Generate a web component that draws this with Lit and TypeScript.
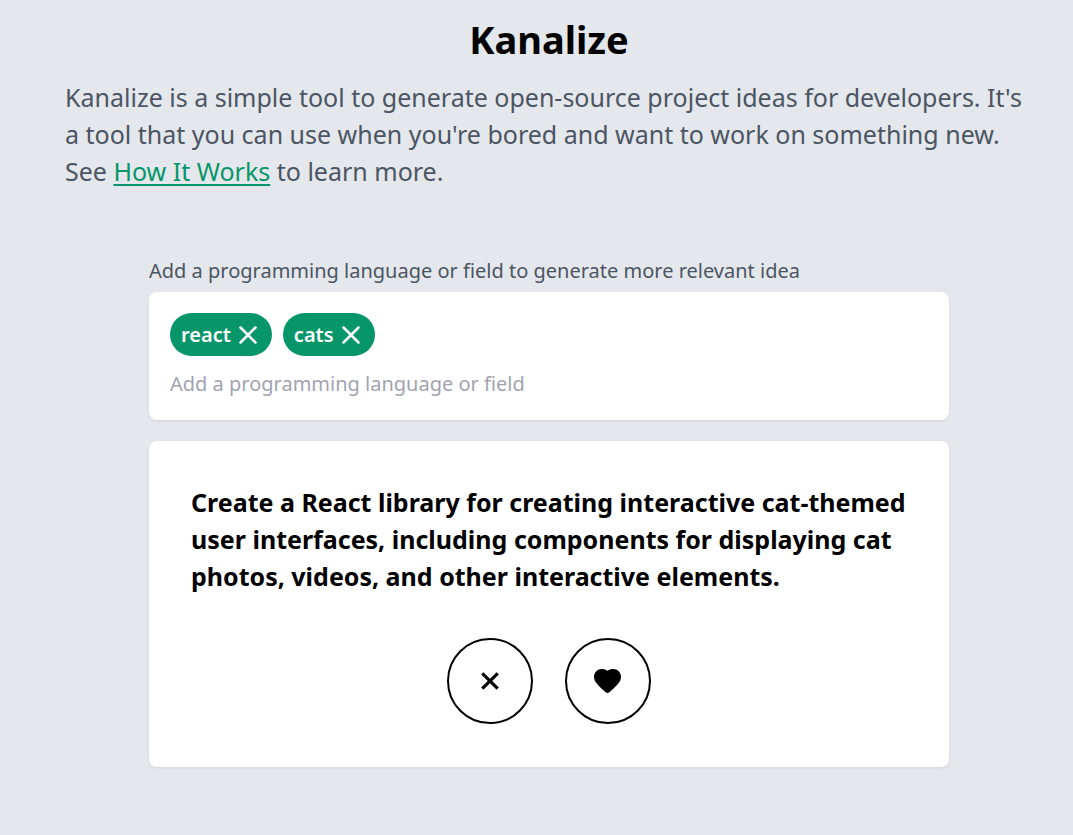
import { LitElement, html, css } from "lit";
import { customElement, state } from "lit/decorators.js";

@customElement("app-root")
export class AppRoot extends LitElement {
  @state() private tags: string[] = ["react", "cats"];

  static styles = css`
    :host {
      display: block;
      box-sizing: border-box;
      min-height: 100vh;
      padding: 15px 40px 68px 65px;
      background: #e4e7eb;
      color: #000;
      font-family: "Segoe UI", "Noto Sans", "Open Sans", sans-serif;
    }
    *, *::before, *::after { box-sizing: border-box; }
    h1, h2, p { margin: 0; }
    button { font: inherit; color: inherit; cursor: pointer; }
    svg { display: block; }
    .title {
      font-size: 38px;
      line-height: 48px;
      font-weight: 700;
      text-align: center;
    }
    .intro {
      margin-top: 16px;
      font-size: 25px;
      line-height: 37px;
      color: #4b5563;
    }
    .link {
      color: #059669;
      text-decoration: underline;
      text-decoration-thickness: 2px;
      text-underline-offset: 3px;
    }
    .panel { max-width: 800px; margin: 66px auto 0; }
    .label {
      display: block;
      font-size: 20px;
      line-height: 30px;
      margin-bottom: 6px;
      color: #4b5563;
    }
    .card {
      background: #fff;
      border-radius: 8px;
      box-shadow: 0 1px 3px rgba(0, 0, 0, 0.08);
    }
    .field { padding: 21px; }
    .tags { display: flex; flex-wrap: wrap; gap: 11px; }
    .tag {
      display: flex;
      align-items: center;
      gap: 4px;
      height: 43px;
      padding: 0 10px 0 11px;
      border-radius: 22px;
      background: #079669;
      color: #fff;
      font-size: 20px;
      font-weight: 600;
    }
    .remove { padding: 0; border: 0; background: none; }
    .entry {
      display: block;
      width: 100%;
      height: 32px;
      margin-top: 11px;
      padding: 0;
      border: 0;
      outline: 0;
      background: none;
      font: inherit;
      font-size: 20px;
      color: #000;
    }
    .entry::placeholder { color: #a1a3b2; opacity: 1; }
    .idea { margin-top: 21px; padding: 43px 42px; }
    .idea-text { font-size: 25px; line-height: 37px; font-weight: 700; }
    .actions {
      display: flex;
      justify-content: center;
      gap: 32px;
      margin-top: 43px;
    }
    .round {
      display: grid;
      place-items: center;
      width: 86px;
      height: 86px;
      padding: 0;
      border: 2px solid #000;
      border-radius: 50%;
      background: none;
    }
  `;

  private remove(tag: string) {
    this.tags = this.tags.filter((t) => t !== tag);
  }

  private add(e: KeyboardEvent) {
    const input = e.target as HTMLInputElement;
    const value = input.value.trim();
    if (e.key !== "Enter" || !value || this.tags.includes(value)) return;
    this.tags = [...this.tags, value];
    input.value = "";
  }

  render() {
    return html`
      <main>
        <h1 class="title">Kanalize</h1>
        <p class="intro">
          Kanalize is a simple tool to generate open-source project ideas for developers. It's a
          tool that you can use when you're bored and want to work on something new. See
          <a class="link" href="#how-it-works">How It Works</a> to learn more.
        </p>
        <section class="panel">
          <label class="label" for="entry">Add a programming language or field to generate more relevant idea</label>
          <div class="card field">
            <div class="tags">
              ${this.tags.map(
                (tag) => html`<span class="tag">${tag}
                  <button class="remove" aria-label="Remove ${tag}" @click=${() => this.remove(tag)}>
                    <svg width="27" height="28" viewBox="0 0 27 28" fill="none" stroke="currentColor" stroke-width="2.5" stroke-linecap="round">
                      <path d="M5.5 6.5L20.5 21.5M20.5 6.5L5.5 21.5" />
                    </svg>
                  </button>
                </span>`
              )}
            </div>
            <input class="entry" id="entry" type="text" placeholder="Add a programming language or field" @keydown=${this.add} />
          </div>
          <article class="card idea">
            <h2 class="idea-text">
              Create a React library for creating interactive cat-themed user interfaces, including
              components for displaying cat photos, videos, and other interactive elements.
            </h2>
            <div class="actions">
              <button class="round" aria-label="Dismiss idea">
                <svg width="32" height="32" viewBox="0 0 32 32" fill="none" stroke="currentColor" stroke-width="3.2">
                  <path d="M8.3 8.3L23.7 23.7M23.7 8.3L8.3 23.7" />
                </svg>
              </button>
              <button class="round" aria-label="Like idea">
                <svg width="32" height="32" viewBox="0 0 32 32" fill="currentColor">
                  <path d="M15.5 5.8C17.2 4.5 19 4 21 4C25.6 4 29 7.4 29 11.8C29 14.8 27.6 17.2 25.2 19.8C23 22.200 20.500 24.600 17.300 27.200Q15.500 28.700 13.700 27.200C10.500 24.600 8 22.200 5.800 19.800C3.400 17.200 2 14.800 2 11.800C2 7.400 5.400 4 10 4C12 4 13.800 4.500 15.500 5.800Z" />
                </svg>
              </button>
            </div>
          </article>
        </section>
      </main>
    `;
  }
}
